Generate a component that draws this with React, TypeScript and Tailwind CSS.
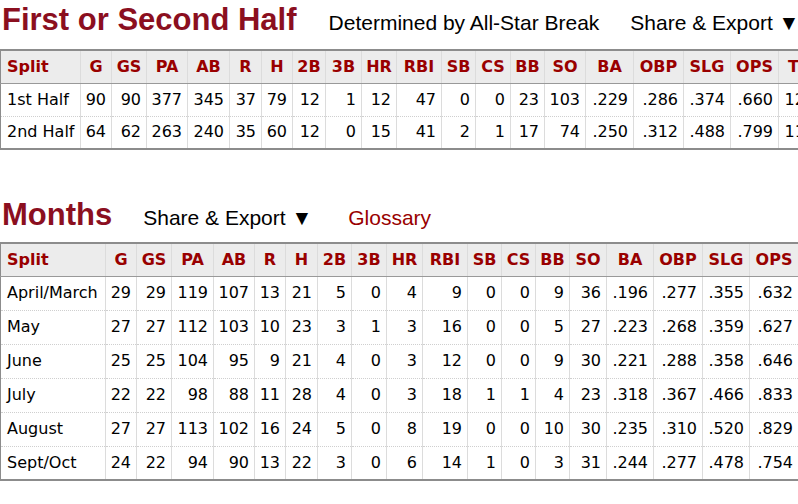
import React from "react";

type Col = { label: string; w: string };

const halfCols: Col[] = [
  { label: "Split", w: "w-[80px]" },
  { label: "G", w: "w-[31px]" },
  { label: "GS", w: "w-[35px]" },
  { label: "PA", w: "w-[41px]" },
  { label: "AB", w: "w-[42px]" },
  { label: "R", w: "w-[32px]" },
  { label: "H", w: "w-[31px]" },
  { label: "2B", w: "w-[33px]" },
  { label: "3B", w: "w-[36px]" },
  { label: "HR", w: "w-[35px]" },
  { label: "RBI", w: "w-[45px]" },
  { label: "SB", w: "w-[34px]" },
  { label: "CS", w: "w-[35px]" },
  { label: "BB", w: "w-[34px]" },
  { label: "SO", w: "w-[41px]" },
  { label: "BA", w: "w-[48px]" },
  { label: "OBP", w: "w-[50px]" },
  { label: "SLG", w: "w-[47px]" },
  { label: "OPS", w: "w-[48px]" },
  { label: "TB", w: "w-[42px]" },
];

const monthCols: Col[] = [
  { label: "Split", w: "w-[105px]" },
  { label: "G", w: "w-[31px]" },
  { label: "GS", w: "w-[35px]" },
  { label: "PA", w: "w-[42px]" },
  { label: "AB", w: "w-[41px]" },
  { label: "R", w: "w-[31px]" },
  { label: "H", w: "w-[32px]" },
  { label: "2B", w: "w-[34px]" },
  { label: "3B", w: "w-[35px]" },
  { label: "HR", w: "w-[36px]" },
  { label: "RBI", w: "w-[45px]" },
  { label: "SB", w: "w-[34px]" },
  { label: "CS", w: "w-[34px]" },
  { label: "BB", w: "w-[34px]" },
  { label: "SO", w: "w-[37px]" },
  { label: "BA", w: "w-[47px]" },
  { label: "OBP", w: "w-[49px]" },
  { label: "SLG", w: "w-[47px]" },
  { label: "OPS", w: "w-[49px]" },
];

const halves = [
  ["1st Half", "90", "90", "377", "345", "37", "79", "12", "1", "12", "47", "0", "0", "23", "103", ".229", ".286", ".374", ".660", "129"],
  ["2nd Half", "64", "62", "263", "240", "35", "60", "12", "0", "15", "41", "2", "1", "17", "74", ".250", ".312", ".488", ".799", "117"],
];

const months = [
  ["April/March", "29", "29", "119", "107", "13", "21", "5", "0", "4", "9", "0", "0", "9", "36", ".196", ".277", ".355", ".632"],
  ["May", "27", "27", "112", "103", "10", "23", "3", "1", "3", "16", "0", "0", "5", "27", ".223", ".268", ".359", ".627"],
  ["June", "25", "25", "104", "95", "9", "21", "4", "0", "3", "12", "0", "0", "9", "30", ".221", ".288", ".358", ".646"],
  ["July", "22", "22", "98", "88", "11", "28", "4", "0", "3", "18", "1", "1", "4", "23", ".318", ".367", ".466", ".833"],
  ["August", "27", "27", "113", "102", "16", "24", "5", "0", "8", "19", "0", "0", "10", "30", ".235", ".310", ".520", ".829"],
  ["Sept/Oct", "24", "22", "94", "90", "13", "22", "3", "0", "6", "14", "1", "0", "3", "31", ".244", ".277", ".478", ".754"],
];

function StatTable({ cols, rows, width, rowH }: { cols: Col[]; rows: string[][]; width: string; rowH: string }) {
  return (
    <table className={`table-fixed border-collapse ${width} font-['DejaVu_Sans',Verdana,sans-serif] text-[16px] text-black`}>
      <thead>
        <tr className="bg-[#ececec] border-t-2 border-[#8c8c8c]">
          {cols.map((c, i) => (
            <th
              key={c.label}
              className={`${c.w} h-[33px] p-0 font-bold text-[#990000] border-b border-b-[#999] border-r border-r-[#dcdcdc] ${
                i === 0 ? "text-left pl-[6px] border-l border-l-[#8c8c8c]" : "text-center"
              }`}
            >
              {c.label}
            </th>
          ))}
        </tr>
      </thead>
      <tbody>
        {rows.map((r, ri) => (
          <tr
            key={r[0]}
            className={ri === rows.length - 1 ? "border-b-2 border-b-[#8c8c8c]" : "border-b border-dotted border-b-[#cfcfcf]"}
          >
            {r.map((v, i) => (
              <td
                key={i}
                className={`${rowH} p-0 whitespace-nowrap border-r border-r-[#dcdcdc] ${
                  i === 0 ? "text-left pl-[6px] border-l border-l-[#8c8c8c]" : "text-right pr-[5px]"
                }`}
              >
                {v}
              </td>
            ))}
          </tr>
        ))}
      </tbody>
    </table>
  );
}

export default function App() {
  return (
    <div className="w-[798px] h-[504px] overflow-hidden bg-white font-['Liberation_Sans',Arial,sans-serif]">
      <div className="flex items-baseline h-[49px] pt-[5px] pl-[2px] whitespace-nowrap">
        <h2 className="text-[31px] leading-[30px] font-bold text-[#8b0f1f]">First or Second Half</h2>
        <span className="ml-[32px] text-[21px] text-black">Determined by All-Star Break</span>
        <span className="ml-[31px] text-[21px] text-black">Share &amp; Export ▼</span>
      </div>
      <StatTable cols={halfCols} rows={halves} width="w-[820px]" rowH="h-[33px]" />

      <div className="flex items-baseline h-[47px] mt-[45px] pt-[5px] pl-[2px] whitespace-nowrap">
        <h2 className="text-[31px] leading-[30px] font-bold text-[#8b0f1f]">Months</h2>
        <span className="ml-[31px] text-[21px] text-black">Share &amp; Export ▼</span>
        <span className="ml-[36px] text-[21px] text-[#990000]">Glossary</span>
      </div>
      <StatTable cols={monthCols} rows={months} width="w-[798px]" rowH="h-[34px]" />
    </div>
  );
}
